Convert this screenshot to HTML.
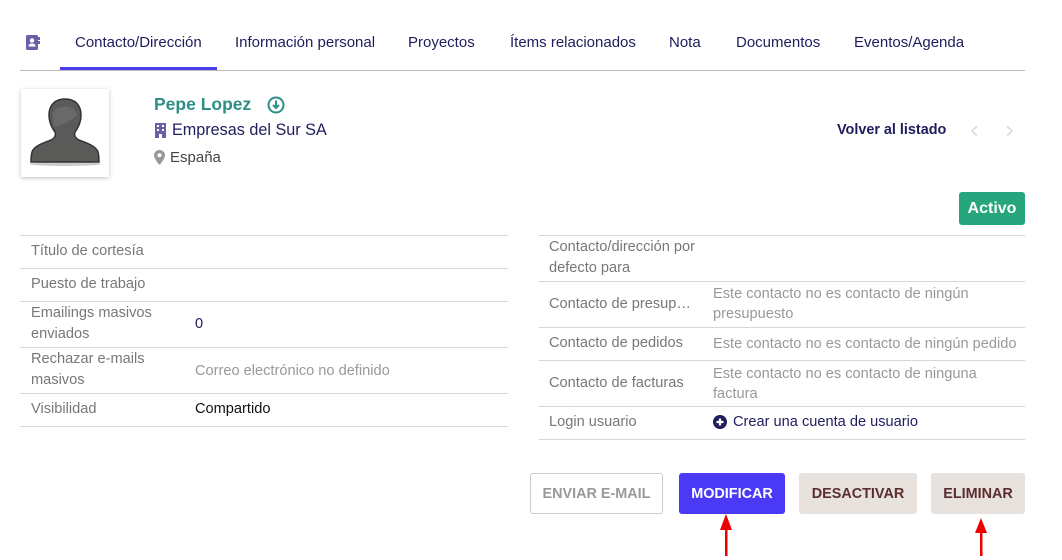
<!DOCTYPE html>
<html><head><meta charset="utf-8"><style>
body{margin:0;width:1062px;height:560px;background:#fff;font-family:"Liberation Sans",sans-serif;position:relative;overflow:hidden}
.a{position:absolute;white-space:nowrap}
.tab{position:absolute;top:34px;font-size:15px;color:#1f1d5c}
.hl{position:absolute;height:1px;background:#d6d6d6}
.lb{position:absolute;font-size:14.6px;color:#777;line-height:21px;white-space:nowrap}
.v{position:absolute;font-size:14.6px;color:#999;line-height:20px;white-space:nowrap}
.btn{position:absolute;top:473px;height:41px;border-radius:3px;font-size:14.4px;font-weight:bold;display:flex;align-items:center;justify-content:center;box-sizing:border-box}
</style></head><body>
<svg class="a" style="left:26px;top:35px" width="14" height="15" viewBox="0 0 14 15"><rect x="0" y="0" width="12" height="15" rx="1.5" fill="#6c5fa8"/><rect x="12" y="2" width="2" height="3" fill="#6c5fa8"/><rect x="12" y="6" width="2" height="3" fill="#6c5fa8"/><circle cx="6" cy="5.5" r="2.2" fill="#fff"/><path d="M2.5 11.5c0-2.2 1.6-3 3.5-3s3.5.8 3.5 3z" fill="#fff"/></svg>
<div class="tab" style="left:75px">Contacto/Dirección</div>
<div class="tab" style="left:235px">Información personal</div>
<div class="tab" style="left:408px">Proyectos</div>
<div class="tab" style="left:510px">Ítems relacionados</div>
<div class="tab" style="left:669px">Nota</div>
<div class="tab" style="left:736px">Documentos</div>
<div class="tab" style="left:854px">Eventos/Agenda</div>
<div class="a" style="left:20px;top:70px;width:1005px;height:1px;background:#bbb"></div>
<div class="a" style="left:60px;top:67px;width:157px;height:3px;background:#4a3ee8"></div>

<div class="a" style="left:21px;top:89px;width:88px;height:88px;background:#fff;box-shadow:0 1px 4px rgba(0,0,0,.25)"></div>
<svg class="a" style="left:21px;top:89px" width="88" height="88" viewBox="0 0 88 88"><ellipse cx="44" cy="75" rx="36" ry="2" fill="#ccc"/><path d="M44 10c-10 0-16 6-16 16 0 7 3 13 6 17 1 3 0 6-4 8-8 3-17 6-19 12-1 4-1 8-1 10h68c0-2 0-6-1-10-2-6-11-9-19-12-4-2-5-5-4-8 3-4 6-10 6-17 0-10-6-16-16-16z" fill="#5a5a58" stroke="#333" stroke-width="1.5"/><path d="M32 24c2-8 22-10 24 2-6 6-14 10-24 12z" fill="#777" opacity=".5"/></svg>

<div class="a" style="left:154px;top:94px;font-size:17.5px;font-weight:bold;color:#2e8f86">Pepe Lopez</div>
<svg class="a" style="left:267px;top:96px" width="18" height="18" viewBox="0 0 18 18"><circle cx="9" cy="9" r="7.5" fill="none" stroke="#2e8f86" stroke-width="2"/><path d="M9 4.5v7M6 9l3 3 3-3" fill="none" stroke="#2e8f86" stroke-width="2"/></svg>
<svg class="a" style="left:155px;top:123px" width="12" height="15" viewBox="0 0 12 15"><rect width="11" height="15" fill="#6c5fa8"/><g fill="#fff"><rect x="2" y="2" width="2" height="2"/><rect x="7" y="2" width="2" height="2"/><rect x="2" y="6" width="2" height="2"/><rect x="7" y="6" width="2" height="2"/><rect x="4" y="11" width="3" height="4"/></g></svg>
<div class="a" style="left:172px;top:121px;font-size:16.2px;color:#1f1d5c">Empresas del Sur SA</div>
<svg class="a" style="left:154px;top:150px" width="11" height="15" viewBox="0 0 11 15"><path d="M5.5 0C2.5 0 0 2.3 0 5.3 0 9 5.5 15 5.5 15S11 9 11 5.3C11 2.3 8.5 0 5.5 0z" fill="#999"/><circle cx="5.5" cy="5.3" r="2" fill="#fff"/></svg>
<div class="a" style="left:170px;top:149px;font-size:15px;color:#444">España</div>

<div class="a" style="left:837px;top:122px;font-size:14.4px;font-weight:bold;color:#1f1d5c">Volver al listado</div>
<svg class="a" style="left:970px;top:124px" width="10" height="14" viewBox="0 0 10 14"><path d="M7 2L2 7l5 5" fill="none" stroke="#ddd" stroke-width="1.8"/></svg>
<svg class="a" style="left:1004px;top:124px" width="10" height="14" viewBox="0 0 10 14"><path d="M3 2l5 5-5 5" fill="none" stroke="#ddd" stroke-width="1.8"/></svg>

<div class="a" style="left:959px;top:192px;width:66px;height:33px;background:#27a67e;border-radius:3px;color:#fff;font-weight:bold;font-size:16px;display:flex;align-items:center;justify-content:center">Activo</div>

<div class="hl" style="left:20px;top:235px;width:488px"></div>
<div class="hl" style="left:20px;top:268px;width:488px"></div>
<div class="hl" style="left:20px;top:301px;width:488px"></div>
<div class="hl" style="left:20px;top:347px;width:488px"></div>
<div class="hl" style="left:20px;top:393px;width:488px"></div>
<div class="hl" style="left:20px;top:426px;width:488px"></div>
<div class="lb" style="left:31px;top:241px">Título de cortesía</div>
<div class="lb" style="left:31px;top:274px">Puesto de trabajo</div>
<div class="lb" style="left:31px;top:303px">Emailings masivos<br>enviados</div>
<div class="a" style="left:195px;top:316px;font-size:14.6px;color:#1f1d5c">0</div>
<div class="lb" style="left:31px;top:349px">Rechazar e-mails<br>masivos</div>
<div class="v" style="left:195px;top:361px">Correo electrónico no definido</div>
<div class="lb" style="left:31px;top:399px">Visibilidad</div>
<div class="a" style="left:195px;top:401px;font-size:14.6px;color:#111">Compartido</div>

<div class="hl" style="left:539px;top:235px;width:486px"></div>
<div class="hl" style="left:539px;top:281px;width:486px"></div>
<div class="hl" style="left:539px;top:327px;width:486px"></div>
<div class="hl" style="left:539px;top:360px;width:486px"></div>
<div class="hl" style="left:539px;top:406px;width:486px"></div>
<div class="hl" style="left:539px;top:439px;width:486px"></div>
<div class="lb" style="left:549px;top:237px">Contacto/dirección por<br>defecto para</div>
<div class="lb" style="left:549px;top:294px">Contacto de presup…</div>
<div class="v" style="left:713px;top:284px">Este contacto no es contacto de ningún<br>presupuesto</div>
<div class="lb" style="left:549px;top:333px">Contacto de pedidos</div>
<div class="v" style="left:713px;top:334px">Este contacto no es contacto de ningún pedido</div>
<div class="lb" style="left:549px;top:373px">Contacto de facturas</div>
<div class="v" style="left:713px;top:364px">Este contacto no es contacto de ninguna<br>factura</div>
<div class="lb" style="left:549px;top:412px">Login usuario</div>
<svg class="a" style="left:713px;top:415px" width="14" height="14" viewBox="0 0 14 14"><circle cx="7" cy="7" r="7" fill="#1f1d5c"/><path d="M7 3.5v7M3.5 7h7" stroke="#fff" stroke-width="2.2"/></svg>
<div class="a" style="left:733px;top:414px;font-size:14.6px;color:#1f1d5c">Crear una cuenta de usuario</div>

<div class="btn" style="left:530px;width:133px;border:1px solid #ccc;color:#999">ENVIAR E-MAIL</div>
<div class="btn" style="left:679px;width:106px;background:#4a3af5;color:#fff">MODIFICAR</div>
<div class="btn" style="left:799px;width:118px;background:#e8e2df;color:#5a2e2e">DESACTIVAR</div>
<div class="btn" style="left:931px;width:94px;background:#e8e2df;color:#5a2e2e">ELIMINAR</div>

<svg class="a" style="left:719px;top:514px" width="14" height="42" viewBox="0 0 14 42"><path d="M7 0L1 16h12z" fill="#e00"/><rect x="6" y="14" width="2.5" height="28" fill="#e00"/></svg>
<svg class="a" style="left:974px;top:518px" width="14" height="38" viewBox="0 0 14 38"><path d="M7 0L1 15h12z" fill="#e00"/><rect x="6" y="13" width="2.5" height="25" fill="#e00"/></svg>
</body></html>
